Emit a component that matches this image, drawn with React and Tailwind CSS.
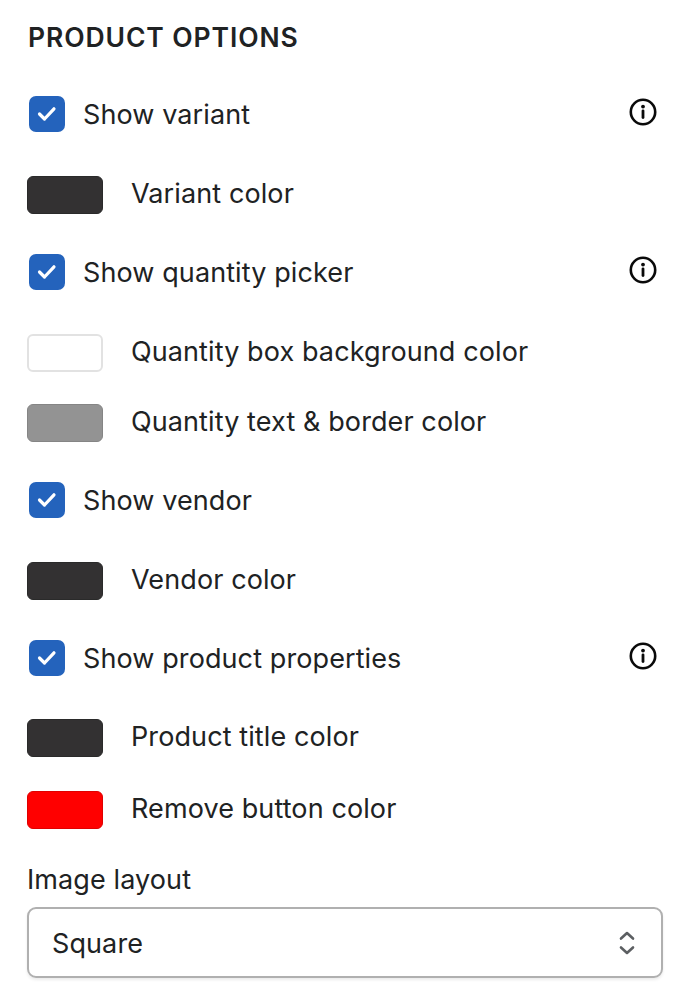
import React from "react";

function Check() {
    return (
        <div className="w-[36px] h-[36px] rounded-[7px] bg-[#2463bc] flex items-center justify-center">
            <svg width="22" height="22" viewBox="0 0 22 22" fill="none">
                <path d="M3.5 11 L8.5 16 L18 5.8" stroke="white" strokeWidth="3.2" strokeLinecap="round" strokeLinejoin="round" />
            </svg>
        </div>
    );
}

function Info() {
    return (
        <svg width="28" height="28" viewBox="0 0 28 28" fill="none">
            <circle cx="14" cy="14" r="12.2" stroke="#0a0a0a" strokeWidth="2.6" />
            <circle cx="14" cy="8.6" r="1.9" fill="#0a0a0a" />
            <path d="M14 12.8 V19.6" stroke="#0a0a0a" strokeWidth="2.8" strokeLinecap="round" />
        </svg>
    );
}

function CheckRow({ label, info, className }) {
    return (
        <div className={`flex items-center h-[36px] pl-[2px] pr-[6px] ${className}`}>
            <Check />
            <span className="ml-[18px] mt-[2px] flex-1 text-[#202223]">{label}</span>
            {info && <div className="-mt-[4px]"><Info /></div>}
        </div>
    );
}

function ColorRow({ label, swatch, className }) {
    return (
        <div className={`flex items-center h-[38px] ${className}`}>
            <div className={`w-[76px] h-[38px] rounded-[6px] border ${swatch}`}></div>
            <span className="ml-[28px] -mt-[3px] text-[#202223]">{label}</span>
        </div>
    );
}

export default function App() {
    return (
        <div className="w-[690px] h-[1000px] bg-white px-[27px] pt-[21px] text-[27px] leading-[32px] tracking-[0.1px] font-['Inter',sans-serif] overflow-hidden">
            <h2 className="font-semibold text-[#202223] text-[26.5px] tracking-[0.9px] pl-[1px]">PRODUCT OPTIONS</h2>
            <CheckRow className="mt-[43px]" label="Show variant" info />
            <ColorRow className="mt-[44px]" label="Variant color" swatch="bg-[#333132] border-[#2a2a2a]" />
            <CheckRow className="mt-[40px]" label="Show quantity picker" info />
            <ColorRow className="mt-[44px]" label="Quantity box background color" swatch="bg-white border-[#e2e2e2] border-2" />
            <ColorRow className="mt-[32px]" label="Quantity text & border color" swatch="bg-[#939393] border-[#858585]" />
            <CheckRow className="mt-[40px]" label="Show vendor" />
            <ColorRow className="mt-[44px]" label="Vendor color" swatch="bg-[#333132] border-[#2a2a2a]" />
            <CheckRow className="mt-[40px]" label="Show product properties" info />
            <ColorRow className="mt-[43px]" label="Product title color" swatch="bg-[#333132] border-[#2a2a2a]" />
            <ColorRow className="mt-[34px]" label="Remove button color" swatch="bg-[#ff0000] border-[#e00000]" />
            <div className="mt-[35px] text-[#202223]">Image layout</div>
            <div className="mt-[11px] w-[636px] h-[71px] rounded-[9px] border-2 border-[#b0b0b0] shadow-[0_2px_3px_rgba(0,0,0,0.08)] flex items-center justify-between pl-[23px] pr-[22px] text-[#202223]">
                <span className="mt-[2px]">Square</span>
                <svg width="24" height="32" viewBox="0 0 24 32" fill="none">
                    <path d="M6 11.5 L12 6 L18 11.5" stroke="#5c5f62" strokeWidth="2.6" strokeLinecap="round" strokeLinejoin="round" />
                    <path d="M6 20.5 L12 26 L18 20.5" stroke="#5c5f62" strokeWidth="2.6" strokeLinecap="round" strokeLinejoin="round" />
                </svg>
            </div>
        </div>
    );
}
